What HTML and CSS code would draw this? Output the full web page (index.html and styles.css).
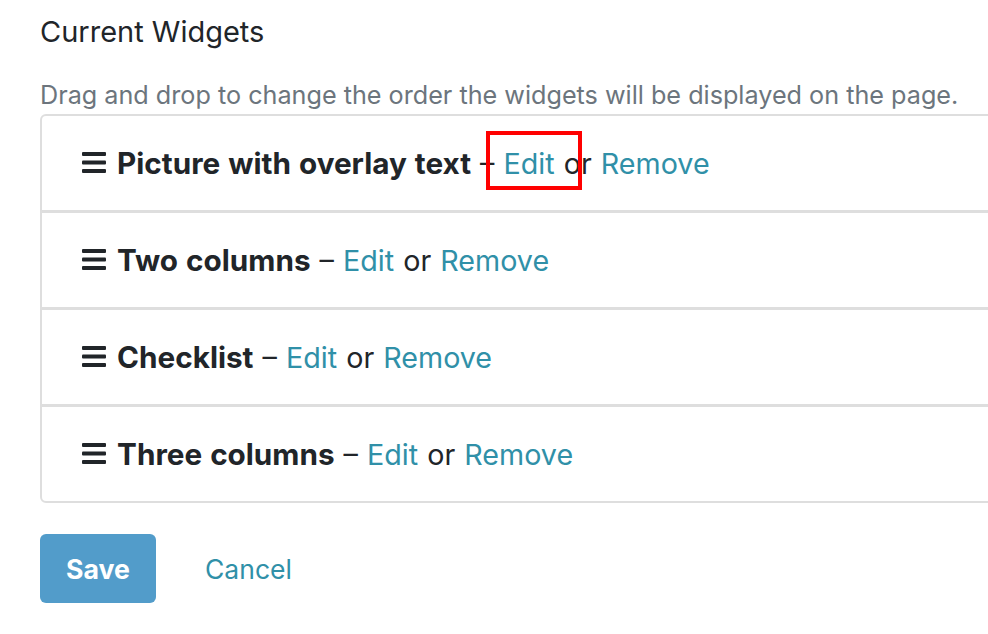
FILE: index.html
```html
<!DOCTYPE html>
<html lang="en">
<head>
    <meta charset="UTF-8">
    <meta name="viewport" content="width=device-width, initial-scale=1.0">
    <title>Current Widgets</title>
    <link rel="stylesheet" href="styles.css">
</head>
<body>
    <div class="page">
        <h2 class="title">Current Widgets</h2>
        <p class="hint">Drag and drop to change the order the widgets will be displayed on the page.</p>

        <ul class="widget-list">
            <li class="widget">
                <svg class="handle" viewBox="0 0 24 21"><rect y="0" width="24" height="4" rx="1"/><rect y="8.5" width="24" height="4" rx="1"/><rect y="17" width="24" height="4" rx="1"/></svg>
                <strong>Picture with overlay text</strong> &ndash;
                <a href="#" class="marked">Edit</a> or <a href="#">Remove</a>
            </li>
            <li class="widget">
                <svg class="handle" viewBox="0 0 24 21"><rect y="0" width="24" height="4" rx="1"/><rect y="8.5" width="24" height="4" rx="1"/><rect y="17" width="24" height="4" rx="1"/></svg>
                <strong>Two columns</strong> &ndash;
                <a href="#">Edit</a> or <a href="#">Remove</a>
            </li>
            <li class="widget">
                <svg class="handle" viewBox="0 0 24 21"><rect y="0" width="24" height="4" rx="1"/><rect y="8.5" width="24" height="4" rx="1"/><rect y="17" width="24" height="4" rx="1"/></svg>
                <strong>Checklist</strong> &ndash;
                <a href="#">Edit</a> or <a href="#">Remove</a>
            </li>
            <li class="widget">
                <svg class="handle" viewBox="0 0 24 21"><rect y="0" width="24" height="4" rx="1"/><rect y="8.5" width="24" height="4" rx="1"/><rect y="17" width="24" height="4" rx="1"/></svg>
                <strong>Three columns</strong> &ndash;
                <a href="#">Edit</a> or <a href="#">Remove</a>
            </li>
        </ul>

        <div class="actions">
            <button class="btn-save">Save</button>
            <a href="#" class="cancel">Cancel</a>
        </div>
    </div>
</body>
</html>
```

FILE: styles.css
```css
html {
    overflow: hidden;
}
body {
    font-family: Inter, "Noto Sans", sans-serif;
    color: #212529;
    background-color: #fff;
    margin: 0;
    padding: 0;
}
.page {
    padding: 14px 0 0 40px;
}
.title {
    font-size: 29px;
    font-weight: 400;
    line-height: 36px;
    margin: 0;
}
.hint {
    color: #6c757d;
    font-size: 25.2px;
    line-height: 32px;
    margin: 29px 0 0 0;
}
.widget-list {
    list-style: none;
    width: 980px;
    margin: 3px 0 0 0;
    padding: 0;
    border: 2px solid #dedede;
    border-radius: 6px;
}
.widget {
    height: 94px;
    line-height: 94px;
    padding-left: 40px;
    font-size: 28.7px;
    word-spacing: 1px;
    white-space: nowrap;
    border-bottom: 3px solid #dedede;
}
.widget:last-child {
    border-bottom: none;
}
.widget strong {
    font-size: 29.7px;
    font-weight: 700;
}
.handle {
    width: 24px;
    height: 21px;
    vertical-align: 1px;
    margin-right: 2px;
    fill: #212529;
}
a {
    color: #3090a8;
    text-decoration: none;
}
.marked {
    position: relative;
}
.marked::after {
    content: "";
    position: absolute;
    left: -18px;
    top: -15px;
    width: 88px;
    height: 51px;
    border: 4px solid #ff0000;
}
.actions {
    display: flex;
    align-items: center;
    margin-top: 31px;
}
.btn-save {
    font-family: Inter, "Noto Sans", sans-serif;
    font-size: 26.7px;
    font-weight: 700;
    color: #fff;
    background-color: #529cca;
    border: none;
    border-radius: 6px;
    width: 116px;
    height: 69px;
    cursor: pointer;
}
.cancel {
    font-size: 26.5px;
    margin-left: 49px;
}
```
